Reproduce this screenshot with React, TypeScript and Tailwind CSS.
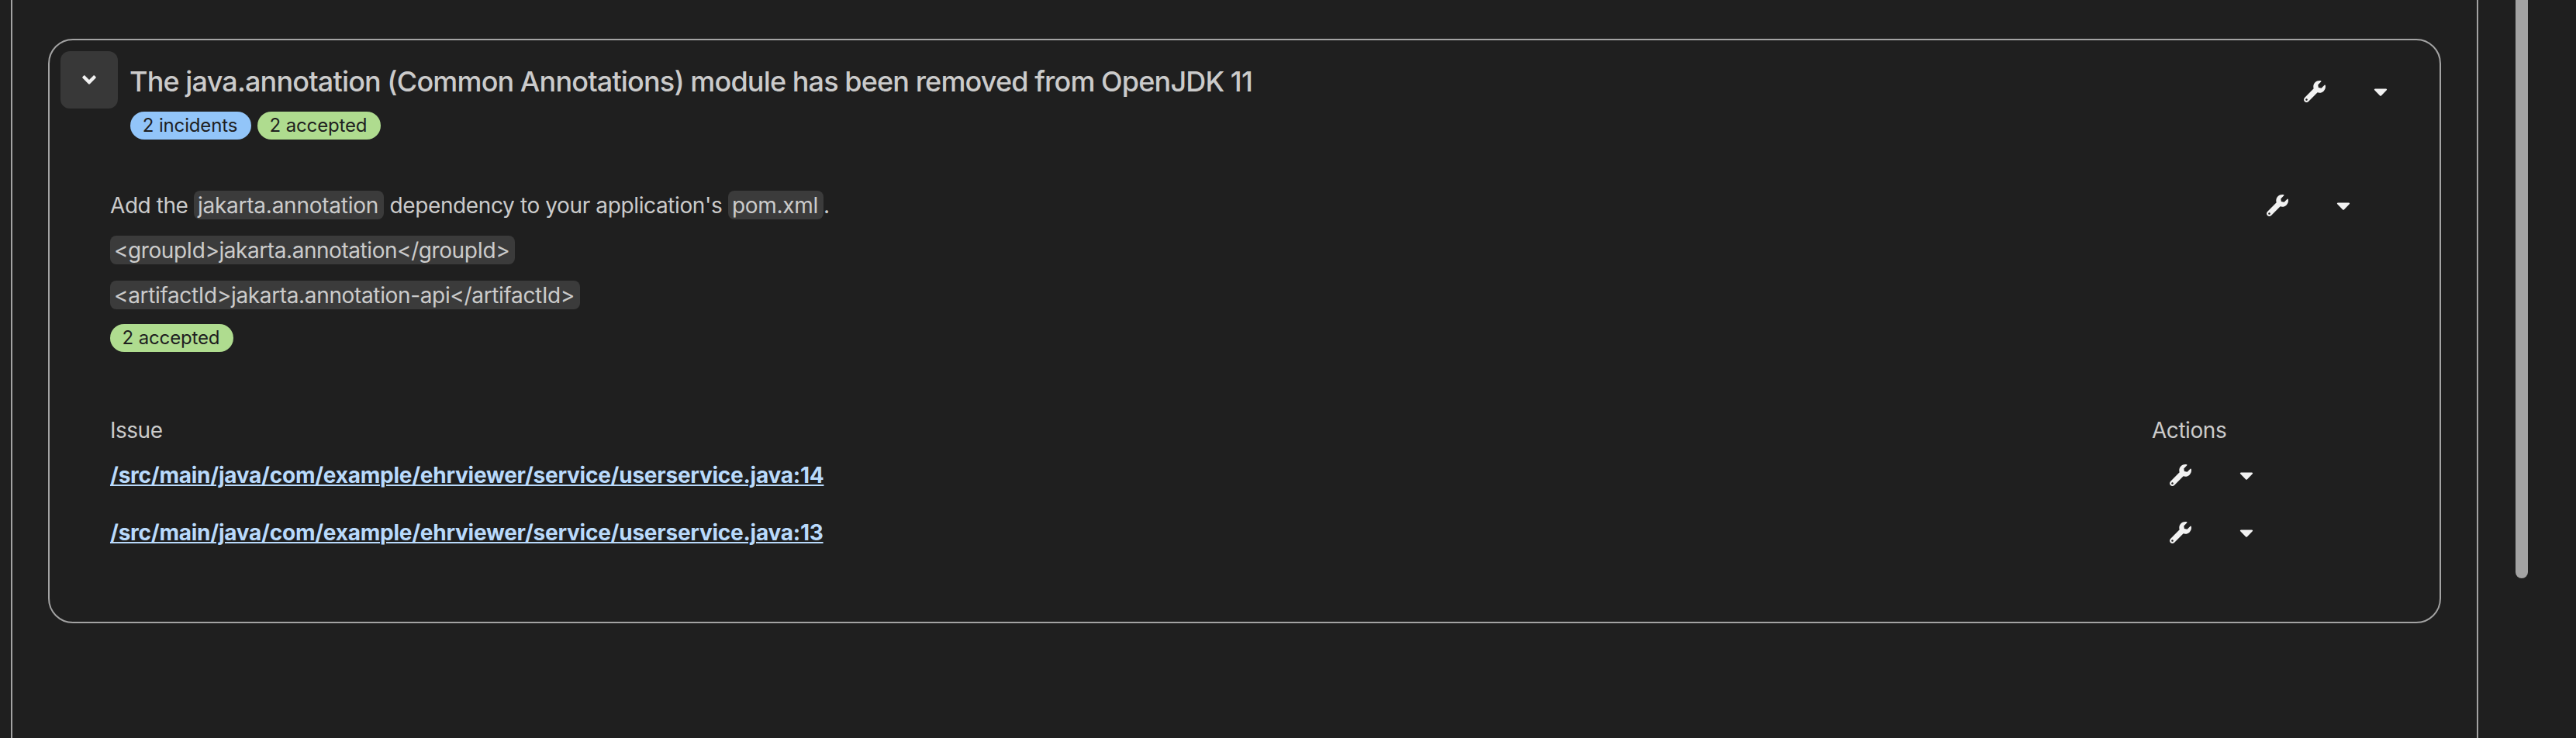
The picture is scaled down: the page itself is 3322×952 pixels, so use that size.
import type { ReactNode } from 'react';
import { FaAngleDown, FaCaretDown, FaWrench } from 'react-icons/fa';

function Badge({ color, children }: { color: 'blue' | 'green'; children: ReactNode }) {
  return (
    <span
      className={
        color === 'blue'
          ? 'flex h-9 w-[156px] items-center justify-center rounded-full bg-[#92c5f9] pr-0.5 text-2xl leading-9 tracking-[-0.15px] text-[#1f1f1f]'
          : 'flex h-9 w-[159px] items-center justify-center rounded-full bg-[#afdc8f] pr-0.5 text-2xl leading-9 tracking-[-0.15px] text-[#1f1f1f]'
      }
    >
      {children}
    </span>
  );
}

function Code({ children, className }: { children: ReactNode; className: string }) {
  return <code className={`rounded-lg bg-[#3b3b3b] pt-0.5 pr-[7px] pb-px pl-[5px] font-[Inter,sans-serif] ${className}`}>{children}</code>;
}

function Actions() {
  return (
    <div className="flex items-center gap-[57px] text-[28px] text-[#f2f2f2]">
      <button aria-label="Resolve">
        <FaWrench />
      </button>
      <button aria-label="More actions">
        <FaCaretDown />
      </button>
    </div>
  );
}

const issues = [
  '/src/main/java/com/example/ehrviewer/service/userservice.java:14',
  '/src/main/java/com/example/ehrviewer/service/userservice.java:13',
];

export default function App() {
  return (
    <div className="flex h-[952px] w-[3322px] justify-between overflow-hidden bg-[#1f1f1f] pr-[62px] pl-3.5 font-[Inter,sans-serif] text-[28px] leading-[42px] text-[#cbcbcb]">
      <main className="w-[3182px] border-x-2 border-[#a3a3a3] px-[46px] pt-[50px]">
        <section className="h-[754px] rounded-[32px] border-2 border-[#a3a3a3]">
          <header className="flex h-48 items-start pt-3.5 pr-[62px] pl-3.5">
            <button aria-label="Collapse" className="flex size-[74px] items-center justify-center rounded-xl bg-[#383838] text-[28px] text-[#f2f2f2]">
              <FaAngleDown />
            </button>
            <div className="ml-4 flex-1 pt-4">
              <h2 className="-ml-px text-4xl leading-[46px] font-medium tracking-[-0.82px] [word-spacing:-0.3px] whitespace-nowrap">
                The java.annotation (Common Annotations) module has been removed from OpenJDK 11
              </h2>
              <div className="mt-4 flex gap-2">
                <Badge color="blue">2 incidents</Badge>
                <Badge color="green">2 accepted</Badge>
              </div>
            </div>
            <div className="pt-[38px]">
              <Actions />
            </div>
          </header>

          <div className="flex items-start justify-between pr-[110px] pl-[78px]">
            <div className="flex flex-col gap-4">
              <p className="whitespace-nowrap">
                <span className="tracking-[-0.43px]">Add the </span>
                <Code className="tracking-[-0.25px]">jakarta.annotation</Code>
                <span className="tracking-[-0.38px]"> dependency to your application's </span>
                <Code className="tracking-[-0.3px]">pom.xml</Code>.
              </p>
              <p className="whitespace-nowrap">
                <Code className="tracking-[-0.44px]">{'<groupId>jakarta.annotation</groupId>'}</Code>
              </p>
              <p className="whitespace-nowrap">
                <Code className="tracking-[-0.35px]">{'<artifactId>jakarta.annotation-api</artifactId>'}</Code>
              </p>
              <div className="flex">
                <Badge color="green">2 accepted</Badge>
              </div>
            </div>
            <div className="flex h-[42px] items-center">
              <Actions />
            </div>
          </div>

          <div className="mt-20 grid grid-cols-[2633px_1fr] pl-[78px]">
            <div className="tracking-[-0.5px]">Issue</div>
            <div className="tracking-[-0.45px]">Actions</div>
            {issues.map((issue) => (
              <div key={issue} className="col-span-2 grid h-[74px] grid-cols-subgrid items-center">
                <a href="#" className="justify-self-start font-bold tracking-[-0.24px] whitespace-nowrap text-[#b9dafc] underline decoration-2 underline-offset-2">
                  {issue}
                </a>
                <div className="pl-[23px]">
                  <Actions />
                </div>
              </div>
            ))}
          </div>
        </section>
      </main>
      <div className="h-[746px] w-4 rounded-b-full bg-[#a3a3a3]" />
    </div>
  );
}
